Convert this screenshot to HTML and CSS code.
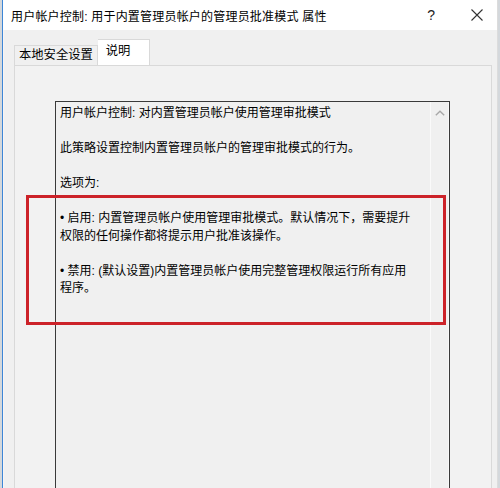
FILE: index.html
```html
<!DOCTYPE html>
<html lang="zh-CN">
<head>
<meta charset="utf-8">
<title>属性</title>
<link rel="stylesheet" href="styles.css">
</head>
<body>
<div class="window">
  <div class="titlebar">
    <span class="title">用户帐户控制: 用于内置管理员帐户的管理员批准模式 属性</span>
    <span class="help">?</span>
    <span class="close">
      <svg width="12" height="12" viewBox="0 0 12 12"><path d="M0.5 0.5 L11.5 11.5 M11.5 0.5 L0.5 11.5" stroke="#333" stroke-width="1.1" fill="none"/></svg>
    </span>
  </div>
  <div class="body">
    <div class="tabs">
      <div class="tab">本地安全设置</div>
      <div class="tab active">说明</div>
    </div>
    <div class="panel">
      <div class="textbox">
        <div class="text">
          <p>用户帐户控制: 对内置管理员帐户使用管理审批模式</p>
          <p>此策略设置控制内置管理员帐户的管理审批模式的行为。</p>
          <p>选项为:</p>
          <p>• 启用: 内置管理员帐户使用管理审批模式。默认情况下，需要提升<br>权限的任何操作都将提示用户批准该操作。</p>
          <p>• 禁用: (默认设置)内置管理员帐户使用完整管理权限运行所有应用<br>程序。</p>
        </div>
        <div class="scrollbar">
          <svg class="chev" width="10" height="6" viewBox="0 0 10 6"><path d="M0.8 5.2 L5 1.2 L9.2 5.2" stroke="#a8a8a8" stroke-width="1.4" fill="none"/></svg>
        </div>
      </div>
    </div>
  </div>
  <div class="highlight"></div>
</div>
</body>
</html>
```
FILE: styles.css
```css
html, body {
  margin: 0;
  padding: 0;
}
body {
  width: 500px;
  height: 488px;
  overflow: hidden;
  background: #d4d8dc;
  font-family: "Liberation Sans", "Noto Sans CJK SC", "Microsoft YaHei", sans-serif;
  font-size: 12px;
  color: #000;
}
.window {
  position: relative;
  margin-left: 2px;
  margin-right: 2px;
  height: 488px;
  box-sizing: border-box;
  border-left: 1px solid #3d86d6;
  border-right: 1px solid #dcdcdc;
  background: #f0f0f0;
  display: flex;
  flex-direction: column;
  overflow: hidden;
}
.titlebar {
  height: 30px;
  background: #fff;
  display: flex;
  align-items: center;
  padding-left: 8px;
  flex: none;
}
.title {
  flex: 1;
  font-size: 12px;
  letter-spacing: 0.2px;
}
.help {
  font-size: 14px;
  color: #222;
  margin-right: 36px;
}
.close {
  display: flex;
  margin-right: 14px;
}
.body {
  flex: 1;
  min-height: 0;
  padding: 9px 5px 0 10px;
  display: flex;
  flex-direction: column;
  border-left: 1px solid #f8f4f4;
}
.tabs {
  display: flex;
  align-items: flex-end;
  height: 26px;
  flex: none;
}
.tab {
  height: 20px;
  box-sizing: border-box;
  border: 1px solid #d9d9d9;
  border-bottom: none;
  padding: 0 4px;
  line-height: 19px;
  font-size: 12.3px;
  background: #f0f0f0;
}
.tab.active {
  height: 26px;
  background: #fff;
  border-left: none;
  padding: 0 19px 0 8px;
  line-height: 22px;
}
.panel {
  flex: 1;
  min-height: 0;
  overflow: hidden;
  border: 1px solid #d9d9d9;
  border-bottom: none;
  background: #f2f2f2;
  padding: 35px 0 0 40px;
  display: flex;
  align-items: stretch;
}
.textbox {
  width: 393px;
  margin-bottom: -4px;
  border: 1px solid #3a3a3a;
  border-left-width: 1.5px;
  background: #f0f0f0;
  display: flex;
  flex: none;
}
.text {
  flex: 1;
  padding: 3px 0 0 4px;
  line-height: 17.5px;
  white-space: nowrap;
  overflow: hidden;
}
.text p {
  margin: 0 0 17.5px;
}
.scrollbar {
  width: 17px;
  border-left: 1px solid #fafafa;
  border-right: 1px solid #f8f8f8;
  display: flex;
  justify-content: center;
  align-items: flex-start;
  padding-top: 8px;
}
.highlight {
  position: absolute;
  left: 23px;
  top: 195px;
  width: 414px;
  height: 124px;
  border: 3px solid #cc2229;
}
```
